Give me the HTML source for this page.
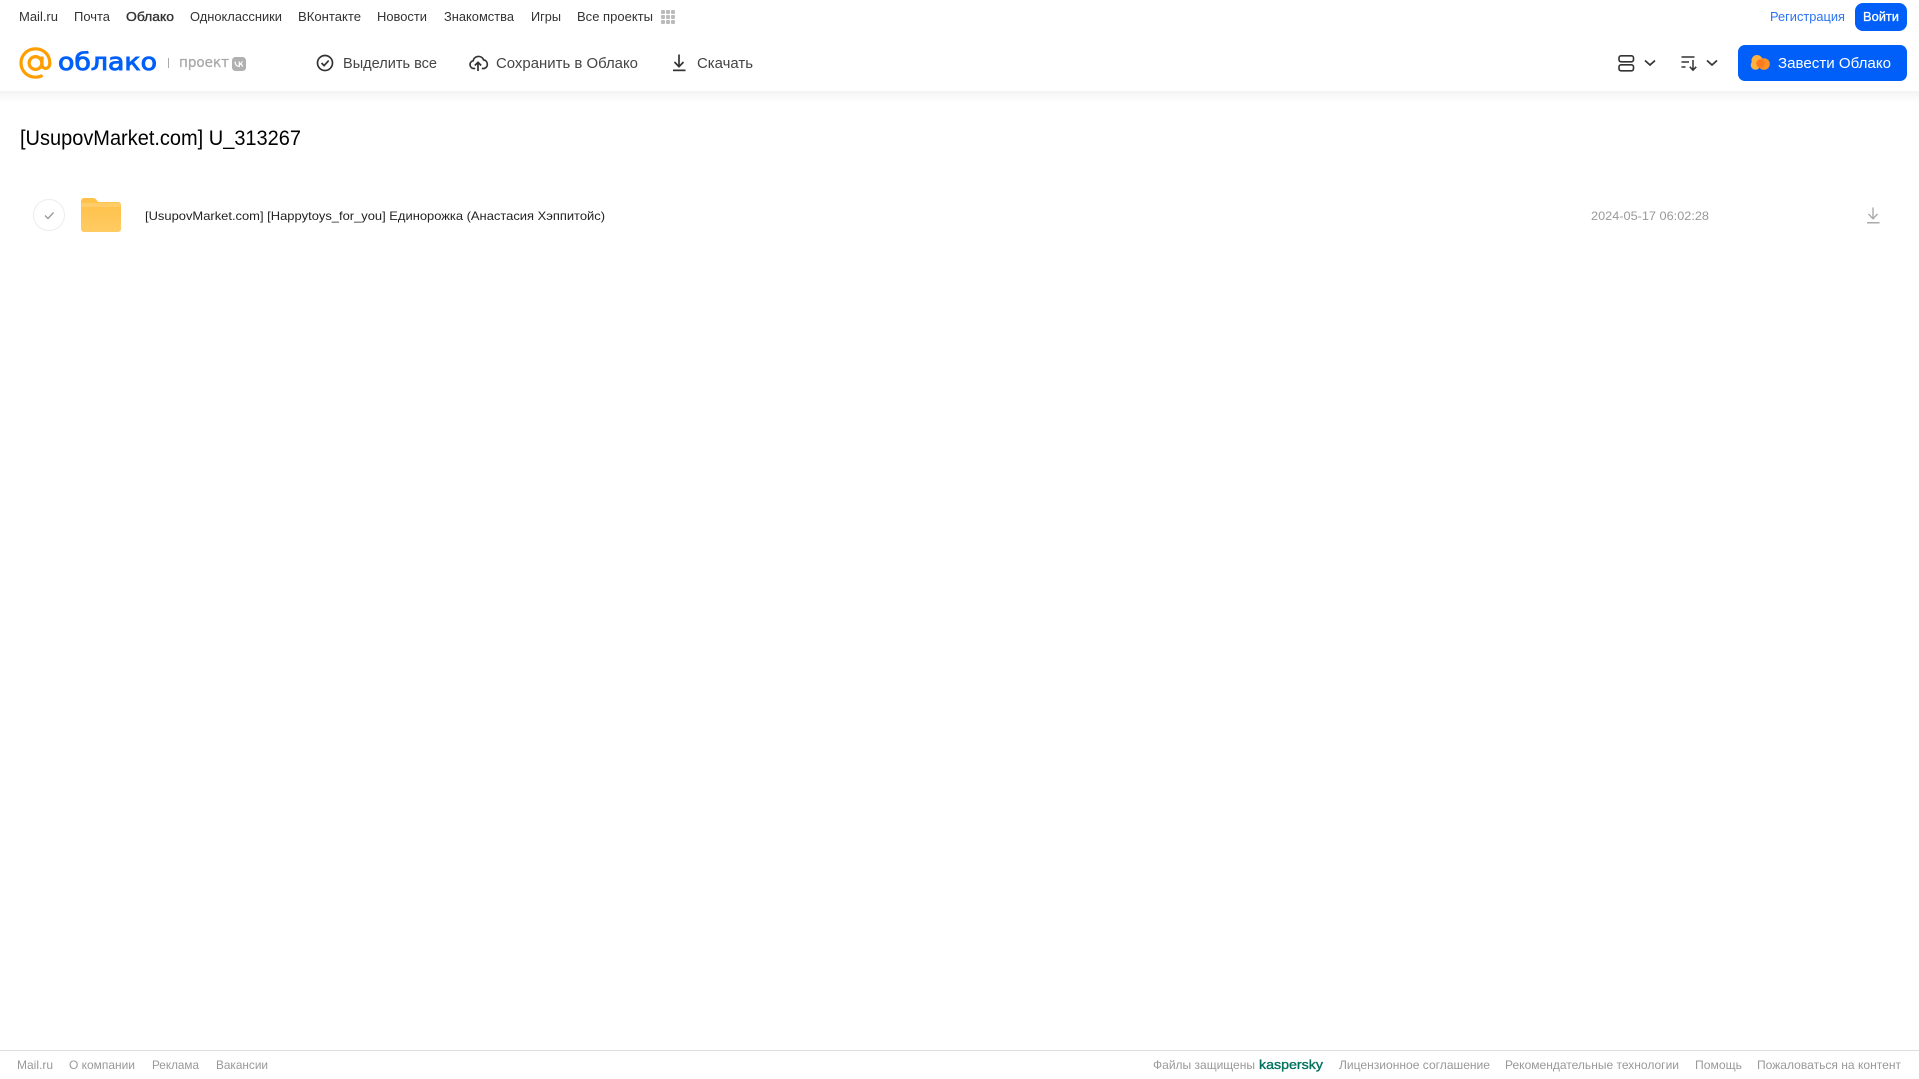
<!DOCTYPE html>
<html lang="ru">
<head>
<meta charset="utf-8">
<title>[UsupovMarket.com] U_313267</title>
<style>
html,body{margin:0;padding:0;background:#fff;width:1919px;height:1079px;overflow:hidden}
svg{display:block;font-family:"Liberation Sans",Arial,sans-serif}
.n{font-size:13px;fill:#333}
.a{font-size:15px;fill:#444}
.f{font-size:12px;fill:#999}
</style>
</head>
<body>
<svg width="1919" height="1079" viewBox="0 0 1919 1079" xmlns="http://www.w3.org/2000/svg">
<defs>
<linearGradient id="sh" x1="0" y1="0" x2="0" y2="1"><stop offset="0" stop-color="#f3f3f3"/><stop offset=".5" stop-color="#fafafa"/><stop offset="1" stop-color="#fff"/></linearGradient>
<linearGradient id="fo" x1="0" y1="0" x2="0" y2="1"><stop offset="0" stop-color="#ffc046"/><stop offset="1" stop-color="#ffcb63"/></linearGradient>
</defs>
<rect x="0" y="91" width="1919" height="12" fill="url(#sh)"/>

<!-- top nav -->
<text class="n" x="19" y="21" textLength="39" lengthAdjust="spacingAndGlyphs">Mail.ru</text>
<text class="n" x="74" y="21" textLength="36" lengthAdjust="spacingAndGlyphs">Почта</text>
<text class="n" x="126" y="21" textLength="48" lengthAdjust="spacingAndGlyphs" stroke="#333" stroke-width=".35">Облако</text>
<text class="n" x="190" y="21" textLength="92" lengthAdjust="spacingAndGlyphs">Одноклассники</text>
<text class="n" x="298" y="21" textLength="63" lengthAdjust="spacingAndGlyphs">ВКонтакте</text>
<text class="n" x="377" y="21" textLength="50" lengthAdjust="spacingAndGlyphs">Новости</text>
<text class="n" x="444" y="21" textLength="70" lengthAdjust="spacingAndGlyphs">Знакомства</text>
<text class="n" x="531" y="21" textLength="30" lengthAdjust="spacingAndGlyphs">Игры</text>
<text class="n" x="577" y="21" textLength="76" lengthAdjust="spacingAndGlyphs">Все проекты</text>
<g fill="#bbb">
<rect x="661" y="10" width="4" height="4" rx="1"/><rect x="666" y="10" width="4" height="4" rx="1"/><rect x="671" y="10" width="4" height="4" rx="1"/>
<rect x="661" y="15" width="4" height="4" rx="1"/><rect x="666" y="15" width="4" height="4" rx="1"/><rect x="671" y="15" width="4" height="4" rx="1"/>
<rect x="661" y="20" width="4" height="4" rx="1"/><rect x="666" y="20" width="4" height="4" rx="1"/><rect x="671" y="20" width="4" height="4" rx="1"/>
</g>
<text x="1770" y="21" font-size="13" fill="#2a74f0" textLength="75" lengthAdjust="spacingAndGlyphs">Регистрация</text>
<rect x="1855" y="3" width="52" height="28" rx="8" fill="#005ff9"/>
<text x="1863" y="21" font-size="13" fill="#fff" stroke="#fff" stroke-width=".3" textLength="36" lengthAdjust="spacingAndGlyphs">Войти</text>

<!-- logo -->
<g fill="none" stroke="#ff9e00" stroke-width="3.2">
<circle cx="35.500" cy="63" r="6.400"/>
<path d="M42 56.500v8.200c0 5 7.800 5.400 7.800-1.700 0-8.200-6.300-14.200-14.300-14.200S21 55 21 63s6.400 14.200 14.500 14.200c2.800 0 5-.6 7-1.800"/>
</g>
<text x="58" y="70" font-family="DejaVu Sans" font-size="24" fill="#005ff9" stroke="#005ff9" stroke-width=".9" textLength="99" lengthAdjust="spacingAndGlyphs">облако</text>
<rect x="168" y="58" width="1" height="10" fill="#aaa"/>
<text x="179" y="67" font-family="DejaVu Sans" font-size="14" fill="#aaa" stroke="#aaa" stroke-width=".3" textLength="50" lengthAdjust="spacingAndGlyphs">проект</text>
<rect x="232" y="57" width="14" height="14" rx="3.500" fill="#b0b0b0"/>
<path d="M235 61.500c.2 3.200 1.800 5 4.300 5v-5M239.300 64c1.500-.3 2.600-1.200 3-2.500M240 64c1.200.2 2.200 1.100 2.700 2.500" fill="none" stroke="#fff" stroke-width="1.200"/>

<!-- actions -->
<circle cx="325" cy="63" r="7.500" fill="none" stroke="#333" stroke-width="1.700"/>
<path d="M321.500 63l2.600 2.600 4.600-5" fill="none" stroke="#333" stroke-width="1.700"/>
<text class="a" x="343" y="68" textLength="94" lengthAdjust="spacingAndGlyphs">Выделить все</text>

<path d="M474.500 68.500h-.8a3.900 3.900 0 0 1-.6-7.700 5.500 5.500 0 0 1 10.500-.9 4.400 4.400 0 0 1 .5 8.600h-1.600" fill="none" stroke="#333" stroke-width="1.700" stroke-linecap="round"/>
<path d="M478 71v-8.500M474.800 65.500l3.200-3.200 3.200 3.200" fill="none" stroke="#333" stroke-width="1.700"/>
<text class="a" x="496" y="68" textLength="142" lengthAdjust="spacingAndGlyphs">Сохранить в Облако</text>

<path d="M679 54.500v12M674.500 62l4.500 4.700 4.500-4.700" fill="none" stroke="#333" stroke-width="1.700"/>
<rect x="673" y="69.500" width="12.500" height="1.700" fill="#333"/>
<text class="a" x="697" y="68" textLength="56" lengthAdjust="spacingAndGlyphs">Скачать</text>

<!-- right controls -->
<rect x="1619" y="55.800" width="14.500" height="6" rx="2" fill="none" stroke="#333" stroke-width="1.600"/>
<rect x="1619" y="64.800" width="14.500" height="6" rx="2" fill="none" stroke="#333" stroke-width="1.600"/>
<path d="M1645 60.500l5 4.500 5-4.500" fill="none" stroke="#333" stroke-width="1.700"/>
<path d="M1681.500 57h13M1681.500 62h7.500M1681.500 67h4" fill="none" stroke="#333" stroke-width="1.400"/>
<path d="M1693 60v10M1689.800 66.800l3.200 3.400 3.200-3.400" fill="none" stroke="#333" stroke-width="1.500"/>
<path d="M1707 60.500l5 4.500 5-4.500" fill="none" stroke="#333" stroke-width="1.700"/>

<rect x="1738" y="45" width="169" height="36" rx="7" fill="#005ff9"/>
<circle cx="1757" cy="60.500" r="5.500" fill="#ffb13d"/>
<circle cx="1755.500" cy="65" r="4.800" fill="#ffb13d"/>
<circle cx="1764" cy="64" r="5.800" fill="#ff9224"/>
<circle cx="1760.500" cy="63.500" r="4.300" fill="#ff7a1f"/>
<text x="1778" y="68" font-size="15" fill="#fff" textLength="113" lengthAdjust="spacingAndGlyphs">Завести Облако</text>

<!-- title -->
<text x="20" y="145" font-size="21" fill="#000" textLength="281" lengthAdjust="spacingAndGlyphs">[UsupovMarket.com] U_313267</text>

<!-- row -->
<circle cx="49" cy="215" r="15.500" fill="#fff" stroke="#ededed" stroke-width="1"/>
<path d="M45 215.500l3 3 5.500-6" fill="none" stroke="#999" stroke-width="1.300"/>
<path d="M81 201a3 3 0 0 1 3-3h8c3 0 4 1 5 2.500s1.500 1.500 3 1.500h18a3 3 0 0 1 3 3v24a3 3 0 0 1-3 3H84a3 3 0 0 1-3-3z" fill="url(#fo)"/>
<path d="M81 206v-1a2 2 0 0 1 2-2h35a3 3 0 0 1 3 3v1H81z" fill="#ffd27a" opacity=".6"/>
<text x="145" y="220" font-size="12" fill="#222" textLength="460" lengthAdjust="spacingAndGlyphs">[UsupovMarket.com] [Happytoys_for_you] Единорожка (Анастасия Хэппитойс)</text>
<text x="1591" y="220" font-size="12" fill="#999" textLength="118" lengthAdjust="spacingAndGlyphs">2024-05-17 06:02:28</text>
<path d="M1873 207.500v11M1868.500 214l4.500 4.700 4.500-4.700" fill="none" stroke="#aaa" stroke-width="1.400"/>
<rect x="1867" y="222" width="12.500" height="1.500" fill="#aaa"/>

<!-- footer -->
<rect x="0" y="1050" width="1919" height="1" fill="#ddd"/>
<text class="f" x="17" y="1069" textLength="36" lengthAdjust="spacingAndGlyphs">Mail.ru</text>
<text class="f" x="69" y="1069" textLength="66" lengthAdjust="spacingAndGlyphs">О компании</text>
<text class="f" x="152" y="1069" textLength="47" lengthAdjust="spacingAndGlyphs">Реклама</text>
<text class="f" x="216" y="1069" textLength="52" lengthAdjust="spacingAndGlyphs">Вакансии</text>
<text class="f" x="1153" y="1069" textLength="102" lengthAdjust="spacingAndGlyphs">Файлы защищены</text>
<text x="1259" y="1069" font-size="13" fill="#00715c" stroke="#00715c" stroke-width=".35" textLength="64" lengthAdjust="spacingAndGlyphs">kaspersky</text>
<text class="f" x="1339" y="1069" textLength="151" lengthAdjust="spacingAndGlyphs">Лицензионное соглашение</text>
<text class="f" x="1505" y="1069" textLength="174" lengthAdjust="spacingAndGlyphs">Рекомендательные технологии</text>
<text class="f" x="1695" y="1069" textLength="47" lengthAdjust="spacingAndGlyphs">Помощь</text>
<text class="f" x="1757" y="1069" textLength="144" lengthAdjust="spacingAndGlyphs">Пожаловаться на контент</text>
</svg>
</body>
</html>
